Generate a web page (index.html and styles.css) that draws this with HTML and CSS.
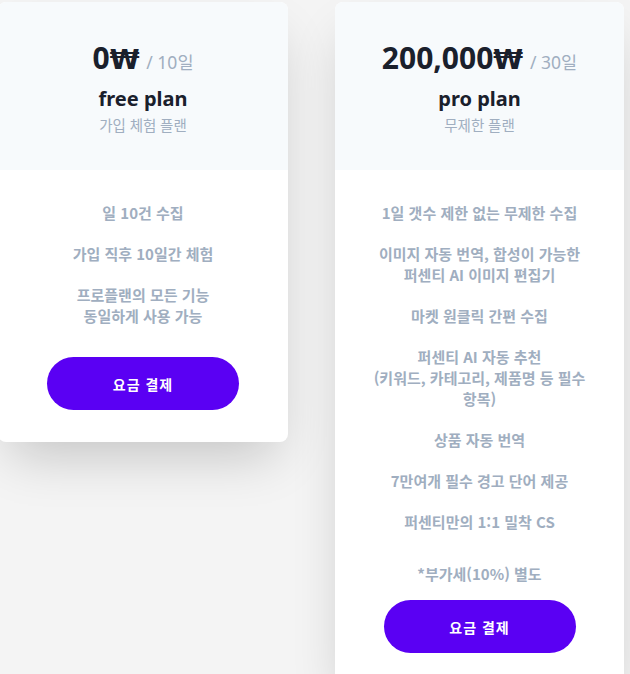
FILE: index.html
```html
<!DOCTYPE html>
<html lang="ko">
<head>
<meta charset="utf-8">
<title>요금제</title>
<link rel="stylesheet" href="styles.css">
</head>
<body>
<div class="cards">
  <section class="card card-free">
    <header class="card-head">
      <div class="price">0<span class="won">₩</span> <span class="per">/ 10일</span></div>
      <h2 class="name">free plan</h2>
      <p class="desc">가입 체험 플랜</p>
    </header>
    <div class="card-body">
      <ul class="features">
        <li>일 10건 수집</li>
        <li>가입 직후 10일간 체험</li>
        <li>프로플랜의 모든 기능<br>동일하게 사용 가능</li>
      </ul>
      <button class="pay">요금 결제</button>
    </div>
  </section>
  <section class="card card-pro">
    <header class="card-head">
      <div class="price">200,000<span class="won">₩</span> <span class="per">/ 30일</span></div>
      <h2 class="name">pro plan</h2>
      <p class="desc">무제한 플랜</p>
    </header>
    <div class="card-body">
      <ul class="features">
        <li>1일 갯수 제한 없는 무제한 수집</li>
        <li>이미지 자동 번역, 합성이 가능한<br>퍼센티 AI 이미지 편집기</li>
        <li>마켓 원클릭 간편 수집</li>
        <li>퍼센티 AI 자동 추천<br>(키워드, 카테고리, 제품명 등 필수<br>항목)</li>
        <li>상품 자동 번역</li>
        <li>7만여개 필수 경고 단어 제공</li>
        <li>퍼센티만의 1:1 밀착 CS</li>
      </ul>
      <p class="note">*부가세(10%) 별도</p>
      <button class="pay">요금 결제</button>
    </div>
  </section>
</div>
</body>
</html>
```

FILE: styles.css
```css
html, body {
  margin: 0;
  padding: 0;
  background: #f4f4f4;
  font-family: "Noto Sans", "Noto Sans CJK KR", sans-serif;
  overflow: hidden;
}

.cards {
  display: flex;
  align-items: flex-start;
  gap: 47px;
  padding-top: 2px;
  margin-left: -2px;
}

.card {
  width: 290px;
  flex: none;
  background: #ffffff;
  border-radius: 8px;
  overflow: hidden;
  box-shadow: 0 25px 50px -12px rgba(0, 0, 0, 0.2);
}

.card-pro {
  width: 289px;
}

.card-head {
  background: #f7fafc;
  text-align: center;
  height: 168px;
  box-sizing: border-box;
  padding-top: 34px;
}

.price {
  font-size: 30px;
  font-weight: 700;
  color: #1a202c;
  line-height: 44px;
}

.won {
  font-family: "DejaVu Sans", sans-serif;
  font-size: 27px;
  letter-spacing: -1px;
}

.per {
  font-size: 17.5px;
  font-weight: 400;
  color: #a0aec0;
}

.name {
  margin: 0;
  font-size: 20px;
  font-weight: 700;
  color: #1a202c;
  line-height: 30px;
}

.desc {
  margin: 0;
  font-size: 14.5px;
  color: #a0aec0;
  line-height: 22px;
}

.card-body {
  padding: 32px 12px 32px;
  display: flex;
  flex-direction: column;
  align-items: center;
}

.features {
  list-style: none;
  margin: 0 0 31px;
  padding: 0;
  display: flex;
  flex-direction: column;
  gap: 20px;
  text-align: center;
}

.features li,
.note {
  font-family: "Noto Sans CJK KR", sans-serif;
  font-size: 15px;
  font-weight: 700;
  line-height: 21px;
  color: #a0aec0;
}

.note {
  margin: 0 0 16px;
  text-align: center;
}

.pay {
  width: 192px;
  height: 53px;
  border: 0;
  border-radius: 27px;
  background: #5a00f3;
  color: #ffffff;
  font-family: "Noto Sans CJK KR", sans-serif;
  font-size: 14px;
  font-weight: 700;
  letter-spacing: 1px;
  cursor: pointer;
}
```
